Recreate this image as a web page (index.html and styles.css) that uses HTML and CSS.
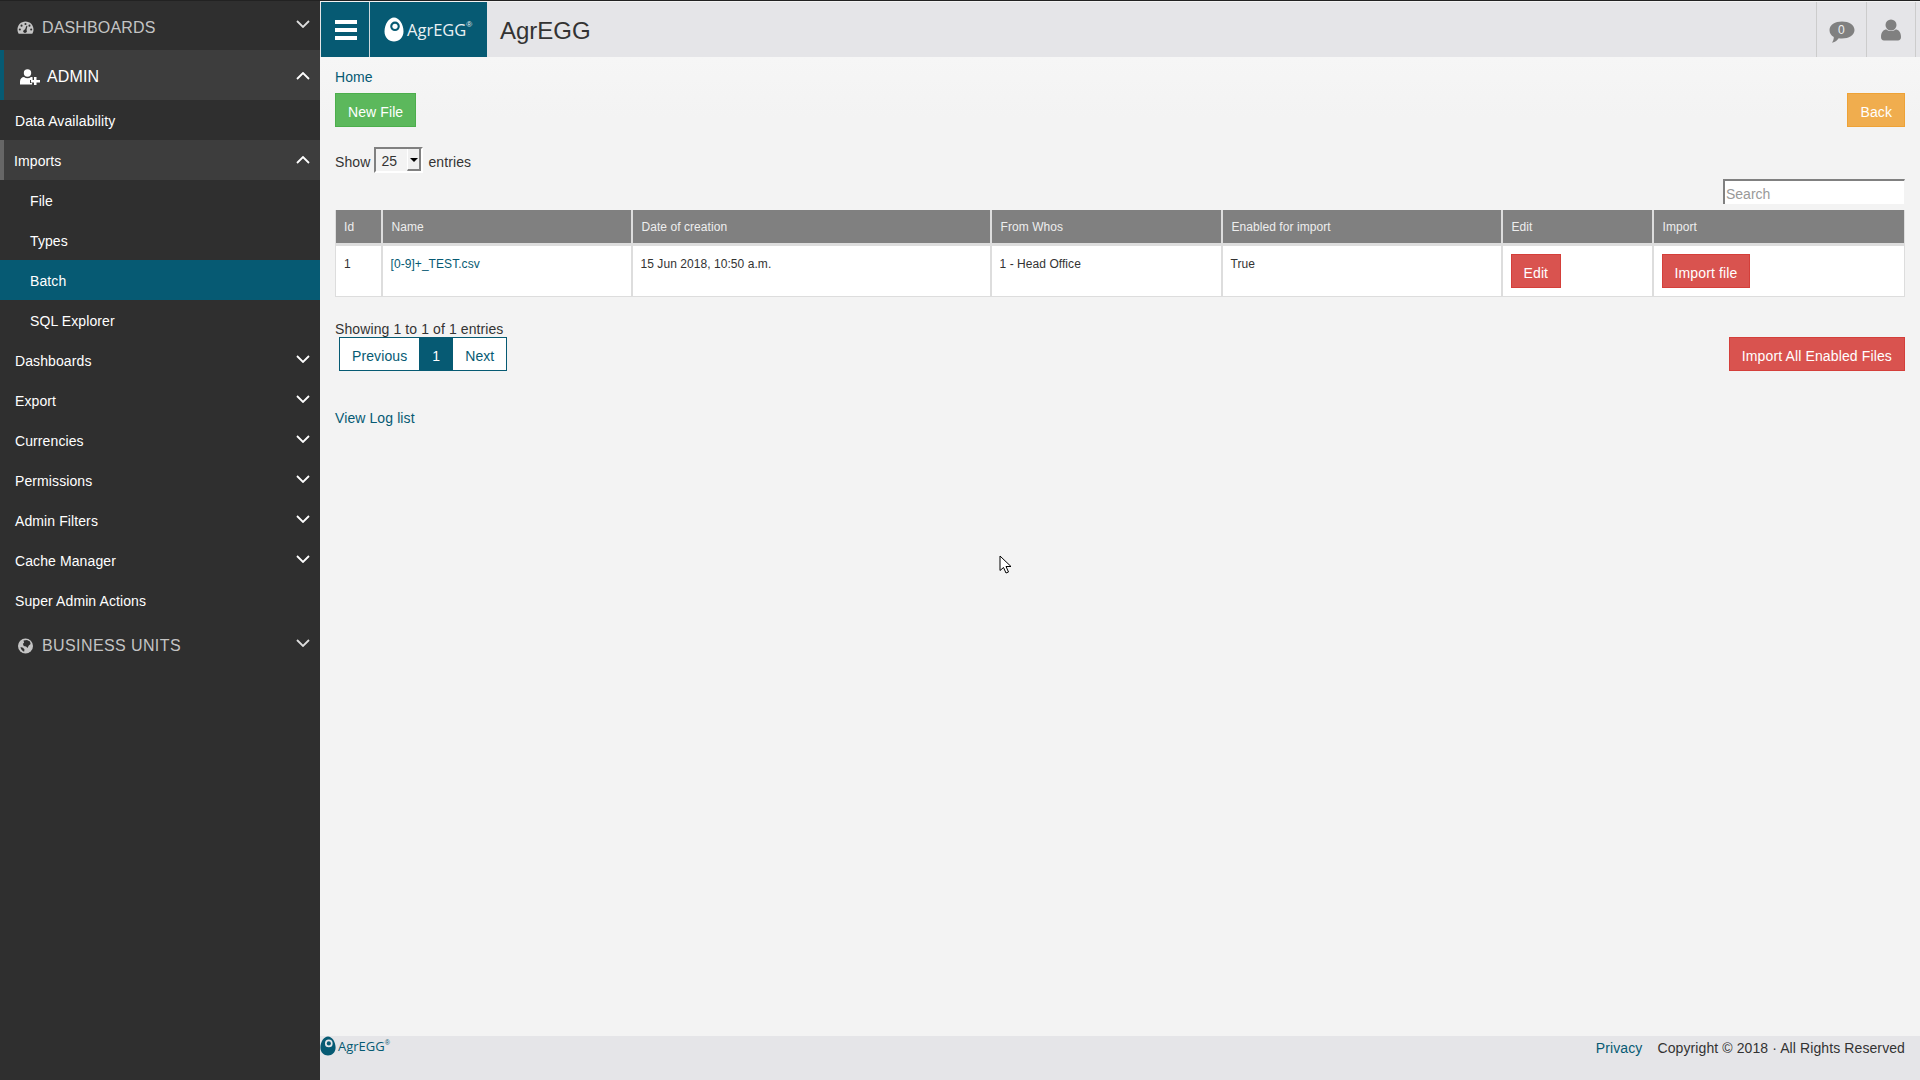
FILE: index.html
```html
<!DOCTYPE html>
<html>
<head>
  <title>AgrEGG</title>
  <link rel="stylesheet" href="styles.css">
</head>
<body>
  <div class="layout">
    <aside class="sidebar">
      <div class="nav-section">
        <svg class="nav-icon" viewBox="0 0 18 16"><path fill="#c4c4c4" d="M9 1C4.200 1 .5 4.800 .5 9.500c0 1.700.5 3.300 1.300 4.500h14.400c.8-1.200 1.300-2.800 1.300-4.500C17.500 4.800 13.800 1 9 1z"/><g fill="#2f2f2f"><circle cx="9" cy="3.800" r="1.100"/><circle cx="4.800" cy="5.500" r="1.100"/><circle cx="3" cy="9.500" r="1.100"/><circle cx="15" cy="9.500" r="1.100"/><circle cx="13.200" cy="5.500" r="1.100"/><circle cx="8.500" cy="11.500" r="1.800"/><path d="M8 11l2-5.500 1 .3-1.200 5.700z"/></g></svg>
        <span>DASHBOARDS</span>
        <svg class="chev" viewBox="0 0 14 8"><path d="M1 1l6 6 6-6"/></svg>
      </div>
      <div class="nav-section open">
        <svg class="nav-icon add-user" viewBox="0 0 20 16"><g fill="#fff"><circle cx="7.500" cy="4" r="3.700"/><path d="M0 15.500v-3c0-3 2-4.500 4-4.500 1 .8 2.200 1.200 3.500 1.200s2.500-.4 3.500-1.200c.6 0 1.100.1 1.600.3v2.700H10v3h2.100v1.500z"/><path d="M14 8h2.500v3H20v2.500h-3.500V16H14v-2.500h-3V11h3z"/></g></svg>
        <span>ADMIN</span>
        <svg class="chev up" viewBox="0 0 14 8"><path d="M1 7l6-6 6 6"/></svg>
      </div>
      <a class="nav-item">Data Availability</a>
      <a class="nav-item current">Imports
        <svg class="chev up" viewBox="0 0 14 8"><path d="M1 7l6-6 6 6"/></svg>
      </a>
      <a class="nav-item sub">File</a>
      <a class="nav-item sub">Types</a>
      <a class="nav-item sub active">Batch</a>
      <a class="nav-item sub">SQL Explorer</a>
      <a class="nav-item">Dashboards
        <svg class="chev" viewBox="0 0 14 8"><path d="M1 1l6 6 6-6"/></svg>
      </a>
      <a class="nav-item">Export
        <svg class="chev" viewBox="0 0 14 8"><path d="M1 1l6 6 6-6"/></svg>
      </a>
      <a class="nav-item">Currencies
        <svg class="chev" viewBox="0 0 14 8"><path d="M1 1l6 6 6-6"/></svg>
      </a>
      <a class="nav-item">Permissions
        <svg class="chev" viewBox="0 0 14 8"><path d="M1 1l6 6 6-6"/></svg>
      </a>
      <a class="nav-item">Admin Filters
        <svg class="chev" viewBox="0 0 14 8"><path d="M1 1l6 6 6-6"/></svg>
      </a>
      <a class="nav-item">Cache Manager
        <svg class="chev" viewBox="0 0 14 8"><path d="M1 1l6 6 6-6"/></svg>
      </a>
      <a class="nav-item">Super Admin Actions</a>
      <div class="nav-section units">
        <svg class="nav-icon" viewBox="0 0 16 16"><circle cx="8" cy="8" r="7.500" fill="#c4c4c4"/><path fill="#2f2f2f" d="M6 2.500l3.500-.6 3 1.600.6 2.500-1.800 1.600-1.300 2.400-1.400-1.500-2.400-.6-.8-2.200 1.200-1zM3 9l2.500.8 1.500 1.700-.4 2.200-1.300-.6L3.500 11z"/></svg>
        <span>BUSINESS UNITS</span>
        <svg class="chev" viewBox="0 0 14 8"><path d="M1 1l6 6 6-6"/></svg>
      </div>
    </aside>

    <div class="main">
      <header class="topbar">
        <button class="menu-btn">
          <span></span><span></span><span></span>
        </button>
        <div class="brand">
          <svg class="egg" viewBox="0 0 20 25"><path fill="#fff" fill-rule="evenodd" d="M10 .5c5 0 9.500 6.500 9.500 14 0 6-4.300 10-9.500 10S.5 20.500.5 14.500C.5 7 5 .5 10 .5zm1 4a4.800 4.800 0 1 0 0 9.600 4.800 4.800 0 0 0 0-9.600z"/><circle cx="11" cy="9.300" r="2.600" fill="#fff"/></svg>
          <span class="brand-name">AgrEGG</span><sup class="reg">®</sup>
        </div>
        <h1 class="page-title">AgrEGG</h1>
        <div class="top-icon">
          <svg class="bubble" viewBox="0 0 26 22"><path fill="#808080" d="M13 .5c6.800 0 12.500 3.400 12.500 8.500S19.800 17.500 13 17.500c-1.200 0-2.300-.1-3.300-.3C8.500 19 6.500 21 3 21.800c1-1.300 1.800-3.300 1.800-5.700C2 14.500.5 12 .5 9 .5 3.900 6.200.5 13 .5z"/></svg>
          <span class="bubble-count">0</span>
        </div>
        <div class="top-icon last">
          <svg class="user" viewBox="0 0 20 22"><g fill="#808080"><circle cx="10" cy="6" r="5.500"/><path d="M0 18c0-5 2.500-7.500 5.500-7.500 1.200 1 2.800 1.600 4.500 1.600s3.300-.6 4.500-1.600c3 0 5.500 2.500 5.500 7.500 0 2-1.200 3.500-3 3.500H3c-1.800 0-3-1.500-3-3.500z"/></g></svg>
        </div>
      </header>

      <main class="content">
        <div class="breadcrumb"><a>Home</a></div>
        <div class="actions">
          <a class="btn btn-green">New File</a>
          <a class="btn btn-orange">Back</a>
        </div>
        <div class="length-row">
          Show
          <span class="length-select">25<span class="select-arrow"></span></span>
          entries
        </div>
        <div class="search-row">
          <input class="search-input" type="text" placeholder="Search">
        </div>
        <table class="data-table">
          <thead>
            <tr>
              <th class="col-id">Id</th>
              <th class="col-name">Name</th>
              <th class="col-date">Date of creation</th>
              <th class="col-from">From Whos</th>
              <th class="col-enabled">Enabled for import</th>
              <th class="col-edit">Edit</th>
              <th>Import</th>
            </tr>
          </thead>
          <tbody>
            <tr>
              <td>1</td>
              <td><a>[0-9]+_TEST.csv</a></td>
              <td>15 Jun 2018, 10:50 a.m.</td>
              <td>1 - Head Office</td>
              <td>True</td>
              <td><a class="btn btn-red">Edit</a></td>
              <td><a class="btn btn-red">Import file</a></td>
            </tr>
          </tbody>
        </table>
        <div class="table-foot">
          <div>
            <div class="info">Showing 1 to 1 of 1 entries</div>
            <div class="pager">
              <a>Previous</a><a class="on">1</a><a>Next</a>
            </div>
          </div>
          <a class="btn btn-red">Import All Enabled Files</a>
        </div>
        <div class="log-link"><a>View Log list</a></div>
      </main>

      <footer class="footer">
        <div class="foot-brand">
          <svg class="foot-egg" viewBox="0 0 20 25"><path fill="#065a73" fill-rule="evenodd" d="M10 .5c5 0 9.500 6.500 9.500 14 0 6-4.300 10-9.500 10S.5 20.500.5 14.500C.5 7 5 .5 10 .5zm1 4a4.800 4.800 0 1 0 0 9.600 4.800 4.800 0 0 0 0-9.600z"/><circle cx="11" cy="9.300" r="2.600" fill="#065a73"/></svg>
          <span class="foot-name">AgrEGG</span><sup class="foot-reg">®</sup>
        </div>
        <div class="foot-links">
          <a>Privacy</a>
          <span>Copyright © 2018 · All Rights Reserved</span>
        </div>
      </footer>
    </div>
  </div>

  <svg class="cursor" viewBox="0 0 13 20"><path fill="#fff" stroke="#000" stroke-width="1" d="M1 1v14.500l3.500-3 2.500 5.500 2.500-1-2.500-5.500H12z"/></svg>
</body>
</html>
```

FILE: styles.css
```css
:root {
  --teal: #065a73;
  --side-bg: #2f2f2f;
  --side-hover: #3d3d3d;
  --bar-bg: #e5e5e8;
  --text: #333;
}

* {
  margin: 0;
  padding: 0;
  box-sizing: border-box;
}

body {
  height: 1080px;
  overflow: hidden;
  font-family: "Liberation Sans", Arial, sans-serif;
  font-size: 14px;
  letter-spacing: 0.1px;
  color: var(--text);
  background: #f3f3f3;
  border-top: 1px solid #222;
}

a {
  color: var(--teal);
  text-decoration: none;
}

.layout {
  display: flex;
  height: 1079px;
}

/* sidebar */
.sidebar {
  width: 320px;
  flex-shrink: 0;
  background: var(--side-bg);
}

.nav-section {
  display: flex;
  align-items: center;
  height: 50px;
  padding: 2px 0 0 17px;
  font-size: 16px;
  letter-spacing: 0.15px;
  color: #c4c4c4;
}

.nav-section:first-child {
  height: 49px;
  padding-top: 4px;
}

.nav-section.open {
  padding: 4px 0 0 16px;
  color: #fff;
  background: var(--side-hover);
  border-left: 4px solid var(--teal);
}

.nav-section.units {
  letter-spacing: 0.4px;
}

.nav-icon {
  width: 17px;
  height: 16px;
  margin-right: 8px;
  flex-shrink: 0;
}

.add-user {
  width: 20px;
  margin-right: 7px;
}

.nav-item {
  display: flex;
  align-items: center;
  height: 40px;
  padding: 2px 0 0 15px;
  color: #fff;
}

.nav-item.sub {
  padding-left: 30px;
}

.nav-item.current {
  padding-left: 10px;
  background: var(--side-hover);
  border-left: 4px solid #666;
}

.nav-item.active {
  background: var(--teal);
}

.chev {
  width: 14px;
  height: 8px;
  margin: -5px 10px 0 auto;
  fill: none;
  stroke: #fff;
  stroke-width: 1.800;
}

.chev.up {
  margin-top: -3px;
}

.nav-section .chev {
  margin-top: -7px;
  stroke: #ddd;
}

.nav-section.open .chev {
  margin-top: -3px;
  stroke: #fff;
}

/* main column */
.main {
  flex: 1;
  min-width: 0;
  display: flex;
  flex-direction: column;
}

.topbar {
  display: flex;
  align-items: stretch;
  height: 55px;
  margin-top: 1px;
  background: var(--bar-bg);
}

.menu-btn {
  display: flex;
  flex-direction: column;
  justify-content: center;
  gap: 4px;
  width: 49px;
  margin-left: 1px;
  padding-left: 14px;
  background: var(--teal);
  border: 0;
  border-right: 1px solid #cfd9dd;
}

.menu-btn span {
  display: block;
  width: 22px;
  height: 4px;
  background: #fff;
}

.brand {
  display: flex;
  align-items: center;
  width: 117px;
  padding-left: 14px;
  background: var(--teal);
  color: #eaf1f3;
}

.egg {
  width: 20px;
  height: 25px;
  flex-shrink: 0;
}

.brand-name {
  margin-left: 3px;
  font-family: "Open Sans", sans-serif;
  font-size: 16.500px;
  letter-spacing: 0;
}

.reg {
  margin-top: -10px;
  font-size: 8px;
  line-height: 1;
}

.page-title {
  flex: 1;
  margin-left: 13px;
  font-size: 24px;
  font-weight: 400;
  letter-spacing: 0;
  line-height: 57px;
}

.top-icon {
  position: relative;
  display: flex;
  align-items: center;
  justify-content: center;
  width: 50px;
  border-left: 1px solid #ccc;
}

.top-icon.last {
  margin-right: 4px;
  border-right: 1px solid #ccc;
}

.bubble {
  width: 26px;
  height: 22px;
  margin-top: 5px;
}

.bubble-count {
  position: absolute;
  top: 21px;
  left: 0;
  right: 0;
  text-align: center;
  font-size: 12px;
  color: #f0f0f0;
}

.user {
  width: 20px;
  height: 22px;
}

/* content */
.content {
  flex: 1;
  padding: 10px 15px 0 15px;
  background: linear-gradient(#f6f6f6, #f3f3f3 60px);
}

.breadcrumb {
  height: 26px;
  line-height: 20px;
}

.actions {
  display: flex;
  justify-content: space-between;
  height: 34px;
}

.btn {
  display: inline-block;
  height: 34px;
  padding: 0 12px;
  line-height: 36px;
  border: 1px solid;
  color: #fff;
  white-space: nowrap;
}

.btn-green {
  background: #5cb85c;
  border-color: #4cae4c;
}

.btn-orange {
  background: #f0ad4e;
  border-color: #eea236;
}

.btn-red {
  background: #d9534f;
  border-color: #d43f3a;
  letter-spacing: 0.13px;
}

.length-row {
  display: flex;
  align-items: center;
  gap: 4px;
  height: 26px;
  margin-top: 20px;
  padding-top: 4px;
}

.length-select {
  position: relative;
  display: block;
  width: 49px;
  height: 26px;
  margin: 0 1px 4px 0;
  padding-left: 5px;
  line-height: 24px;
  border: 2px solid;
  border-color: #808080 #fff #fff #808080;
  background: #f3f3f3;
}

.select-arrow {
  position: absolute;
  top: 0;
  right: 0;
  width: 14px;
  height: 22px;
  background: #f0f0f0;
  border-right: 2px solid #808080;
  border-bottom: 2px solid #808080;
  border-left: 1px solid #fff;
}

.select-arrow::after {
  content: "";
  position: absolute;
  top: 9px;
  left: 2px;
  border: 4px solid transparent;
  border-top-color: #000;
  border-bottom: 0;
}

.search-row {
  display: flex;
  justify-content: flex-end;
  margin-top: 6px;
}

.search-input {
  width: 182px;
  height: 25px;
  padding: 2px 1px 0;
  font-family: inherit;
  font-size: 14px;
  border: 0;
  border-top: 2px solid #808080;
  border-left: 2px solid #808080;
  border-right: 1px solid #f3f3f3;
  background: #fff;
}

.search-input::placeholder {
  color: #999;
}

.data-table {
  width: 1570px;
  margin-top: 6px;
  table-layout: fixed;
  border-collapse: collapse;
  background: #fff;
  font-size: 12px;
  letter-spacing: 0.06px;
  border: 1px solid #ddd;
  border-top: 0;
}

.data-table th {
  height: 34px;
  padding: 2px 8px 0 9px;
  text-align: left;
  font-weight: 400;
  color: #eee;
  background: #808080;
  border-left: 2px solid #ddd;
  border-bottom: 3px solid #ddd;
}

.data-table td {
  height: 50px;
  padding: 8px;
  line-height: 20px;
  vertical-align: top;
  border-left: 2px solid #ddd;
}

.data-table th:first-child,
.data-table td:first-child {
  padding-left: 8px;
  border-left: 0;
}

.data-table td .btn {
  vertical-align: top;
  font-size: 14px;
  line-height: 36px;
}

.col-id { width: 46px; }
.col-name { width: 250px; }
.col-date { width: 359px; }
.col-from { width: 231px; }
.col-enabled { width: 280px; }
.col-edit { width: 151px; }

.table-foot {
  display: flex;
  justify-content: space-between;
  align-items: flex-end;
  margin-top: 25px;
}

.info {
  line-height: 15px;
}

.pager {
  display: flex;
  height: 34px;
  margin-left: 4px;
  border: 1px solid var(--teal);
  background: #fff;
}

.pager a {
  padding: 0 12px;
  line-height: 36px;
}

.pager a.on {
  padding: 0 13px;
  color: #fff;
  background: var(--teal);
}

.log-link {
  margin-top: 37px;
  line-height: 20px;
}

/* footer */
.footer {
  display: flex;
  justify-content: space-between;
  align-items: flex-start;
  height: 44px;
  padding: 2px 15px 0 0;
  background: var(--bar-bg);
}

.foot-brand {
  display: flex;
  align-items: center;
  margin-top: -2px;
  color: var(--teal);
}

.foot-egg {
  width: 16px;
  height: 20px;
}

.foot-name {
  margin-left: 2px;
  font-family: "Open Sans", sans-serif;
  font-size: 13px;
  letter-spacing: 0;
}

.foot-reg {
  margin-top: -8px;
  font-size: 7px;
  line-height: 1;
}

.foot-links {
  display: flex;
  gap: 15px;
  line-height: 20px;
}

.cursor {
  position: absolute;
  left: 999px;
  top: 555px;
  width: 13px;
  height: 20px;
}
```
